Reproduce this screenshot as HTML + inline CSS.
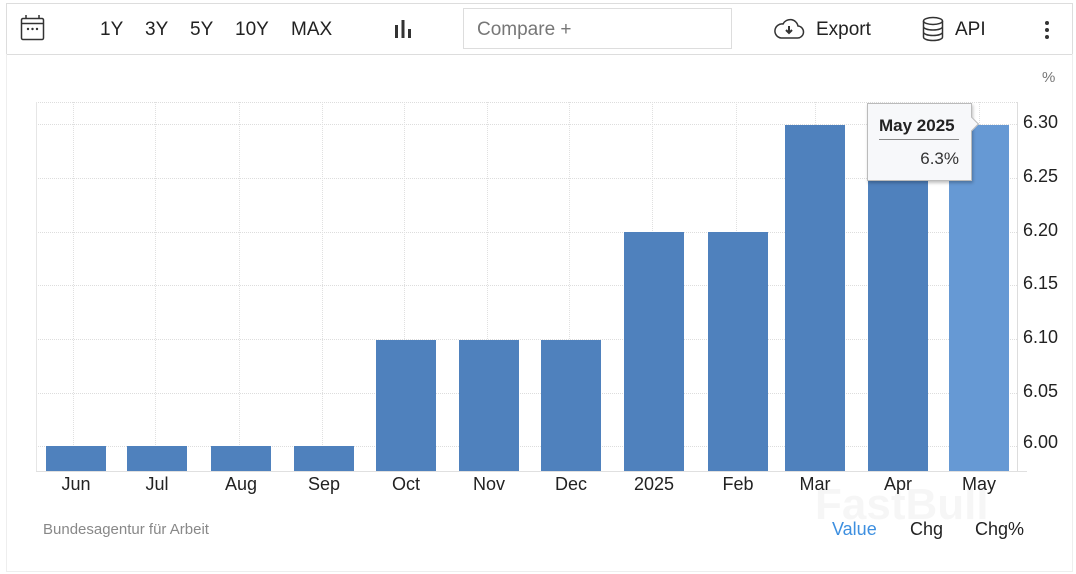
<!DOCTYPE html>
<html><head><meta charset="utf-8"><style>
*{margin:0;padding:0;box-sizing:border-box}
body{width:1076px;height:574px;background:#fff;font-family:"Liberation Sans",sans-serif;position:relative;overflow:hidden;color:#222}
.a{position:absolute}
.tb{left:6px;top:3px;width:1067px;height:52px;border:1px solid #ddd;border-bottom:1px solid #ddd}
.frame{left:6px;top:54px;width:1067px;height:518px;border:1px solid #eee;border-top:none}
.rng{font-size:19px;top:19px;color:#222}
.bar{position:absolute;background:#4f81bd;width:60px;bottom:103px}
.xl{position:absolute;top:474px;font-size:18px;width:80px;text-align:center;color:#222}
.yl{position:absolute;left:1023px;font-size:18px;color:#222}
.hg{position:absolute;left:36px;width:981px;border-top:1px dotted #ddd;height:0}
.vg{position:absolute;top:102px;height:369px;border-left:1px dotted #e0e0e0;width:0}
</style></head><body>
<div class="a tb"></div>
<div class="a frame"></div>
<svg class="a" style="left:20px;top:14px" width="26" height="28" viewBox="0 0 26 28"><rect x="1.5" y="4.5" width="22" height="21" rx="1.5" fill="none" stroke="#333" stroke-width="1.5"/><line x1="1.5" y1="9.5" x2="23.5" y2="9.5" stroke="#333" stroke-width="1.5"/><line x1="6" y1="1" x2="6" y2="5" stroke="#333" stroke-width="1.5"/><line x1="19" y1="1" x2="19" y2="5" stroke="#333" stroke-width="1.5"/><circle cx="8" cy="15" r="1.2" fill="#333"/><circle cx="12.5" cy="15" r="1.2" fill="#333"/><circle cx="17" cy="15" r="1.2" fill="#333"/></svg>
<div class="a rng" style="left:100px">1Y</div>
<div class="a rng" style="left:145px">3Y</div>
<div class="a rng" style="left:190px">5Y</div>
<div class="a rng" style="left:235px">10Y</div>
<div class="a rng" style="left:291px">MAX</div>
<svg class="a" style="left:393px;top:19px" width="20" height="20"><rect x="2" y="6" width="3" height="13" fill="#333"/><rect x="8.5" y="1" width="3" height="18" fill="#333"/><rect x="15" y="10" width="3" height="9" fill="#333"/></svg>
<div class="a" style="left:463px;top:8px;width:269px;height:41px;border:1px solid #ddd"></div>
<div class="a" style="left:477px;top:19px;font-size:19px;color:#777">Compare +</div>
<svg class="a" style="left:773px;top:17px" width="32" height="24" viewBox="0 0 32 24"><path d="M8 21 H24 a6 6 0 0 0 1-12 a8 8 0 0 0-15-2 a7 7 0 0 0-2 14z" fill="none" stroke="#333" stroke-width="1.5"/><path d="M16 9v7M13 13l3 3 3-3" fill="none" stroke="#333" stroke-width="2"/></svg>
<div class="a" style="left:816px;top:19px;font-size:19px">Export</div>
<svg class="a" style="left:921px;top:16px" width="24" height="26" viewBox="0 0 24 26"><ellipse cx="12" cy="5" rx="9.5" ry="3.5" fill="none" stroke="#333" stroke-width="1.5"/><path d="M2.5 5v16c0 2 4 3.5 9.5 3.5s9.5-1.5 9.5-3.5V5M2.5 10.5c0 2 4 3.5 9.5 3.5s9.5-1.5 9.5-3.5M2.5 16c0 2 4 3.5 9.5 3.5s9.5-1.5 9.5-3.5" fill="none" stroke="#333" stroke-width="1.5"/></svg>
<div class="a" style="left:955px;top:19px;font-size:19px">API</div>
<svg class="a" style="left:1043px;top:20px" width="8" height="20"><circle cx="4" cy="3" r="2" fill="#333"/><circle cx="4" cy="10" r="2" fill="#333"/><circle cx="4" cy="17" r="2" fill="#333"/></svg>
<div class="a" style="left:1042px;top:69px;font-size:15px;color:#777">%</div>

<div class="hg" style="top:102px"></div>
<div class="hg" style="top:124px"></div>
<div class="hg" style="top:178px"></div>
<div class="hg" style="top:232px"></div>
<div class="hg" style="top:285px"></div>
<div class="hg" style="top:339px"></div>
<div class="hg" style="top:393px"></div>
<div class="hg" style="top:446px"></div>
<div class="a" style="left:36px;top:102px;width:1px;height:369px;background:#e6e6e6"></div>
<div class="vg" style="left:73px"></div><div class="vg" style="left:155px"></div><div class="vg" style="left:239px"></div><div class="vg" style="left:322px"></div><div class="vg" style="left:404px"></div><div class="vg" style="left:487px"></div><div class="vg" style="left:569px"></div><div class="vg" style="left:652px"></div><div class="vg" style="left:736px"></div><div class="vg" style="left:815px"></div><div class="vg" style="left:898px"></div><div class="vg" style="left:979px"></div>
<div class="a" style="left:1017px;top:102px;width:1px;height:369px;background:#ddd"></div>
<div class="a" style="left:36px;top:471px;width:991px;height:1px;background:#e0e0e0"></div>

<div class="bar" style="left:46px;top:446px"></div>
<div class="bar" style="left:127px;top:446px"></div>
<div class="bar" style="left:211px;top:446px"></div>
<div class="bar" style="left:294px;top:446px"></div>
<div class="bar" style="left:376px;top:340px"></div>
<div class="bar" style="left:459px;top:340px"></div>
<div class="bar" style="left:541px;top:340px"></div>
<div class="bar" style="left:624px;top:232px"></div>
<div class="bar" style="left:708px;top:232px"></div>
<div class="bar" style="left:785px;top:125px"></div>
<div class="bar" style="left:868px;top:125px"></div>
<div class="bar" style="left:949px;top:125px;background:#6699d4"></div>

<div class="xl" style="left:36px">Jun</div><div class="xl" style="left:117px">Jul</div><div class="xl" style="left:201px">Aug</div><div class="xl" style="left:284px">Sep</div><div class="xl" style="left:366px">Oct</div><div class="xl" style="left:449px">Nov</div><div class="xl" style="left:531px">Dec</div><div class="xl" style="left:614px">2025</div><div class="xl" style="left:698px">Feb</div><div class="xl" style="left:775px">Mar</div><div class="xl" style="left:858px">Apr</div><div class="xl" style="left:939px">May</div>

<div class="yl" style="top:112px">6.30</div><div class="yl" style="top:166px">6.25</div><div class="yl" style="top:220px">6.20</div><div class="yl" style="top:273px">6.15</div><div class="yl" style="top:327px">6.10</div><div class="yl" style="top:381px">6.05</div><div class="yl" style="top:432px">6.00</div>

<div class="a" style="left:867px;top:103px;width:105px;height:78px;background:#f7f8fa;border:1px solid #bbb;box-shadow:1px 2px 3px rgba(0,0,0,.25)"></div>
<div class="a" style="left:967px;top:119px;width:10px;height:10px;background:#f7f8fa;border-top:1px solid #bbb;border-right:1px solid #bbb;transform:rotate(45deg)"></div>
<div class="a" style="left:879px;top:116px;font-size:17px;font-weight:bold;color:#222">May 2025</div>
<div class="a" style="left:879px;top:139px;width:80px;height:1px;background:#888"></div>
<div class="a" style="left:879px;top:149px;width:80px;text-align:right;font-size:17px;color:#333">6.3%</div>

<div class="a" style="left:815px;top:480px;font-size:44px;font-weight:bold;color:rgba(0,0,0,0.035)">FastBull</div>
<div class="a" style="left:43px;top:521px;font-size:15px;color:#888">Bundesagentur für Arbeit</div>
<div class="a" style="left:832px;top:519px;font-size:18px;color:#3d8fe0">Value</div>
<div class="a" style="left:910px;top:519px;font-size:18px">Chg</div>
<div class="a" style="left:975px;top:519px;font-size:18px">Chg%</div>
</body></html>
